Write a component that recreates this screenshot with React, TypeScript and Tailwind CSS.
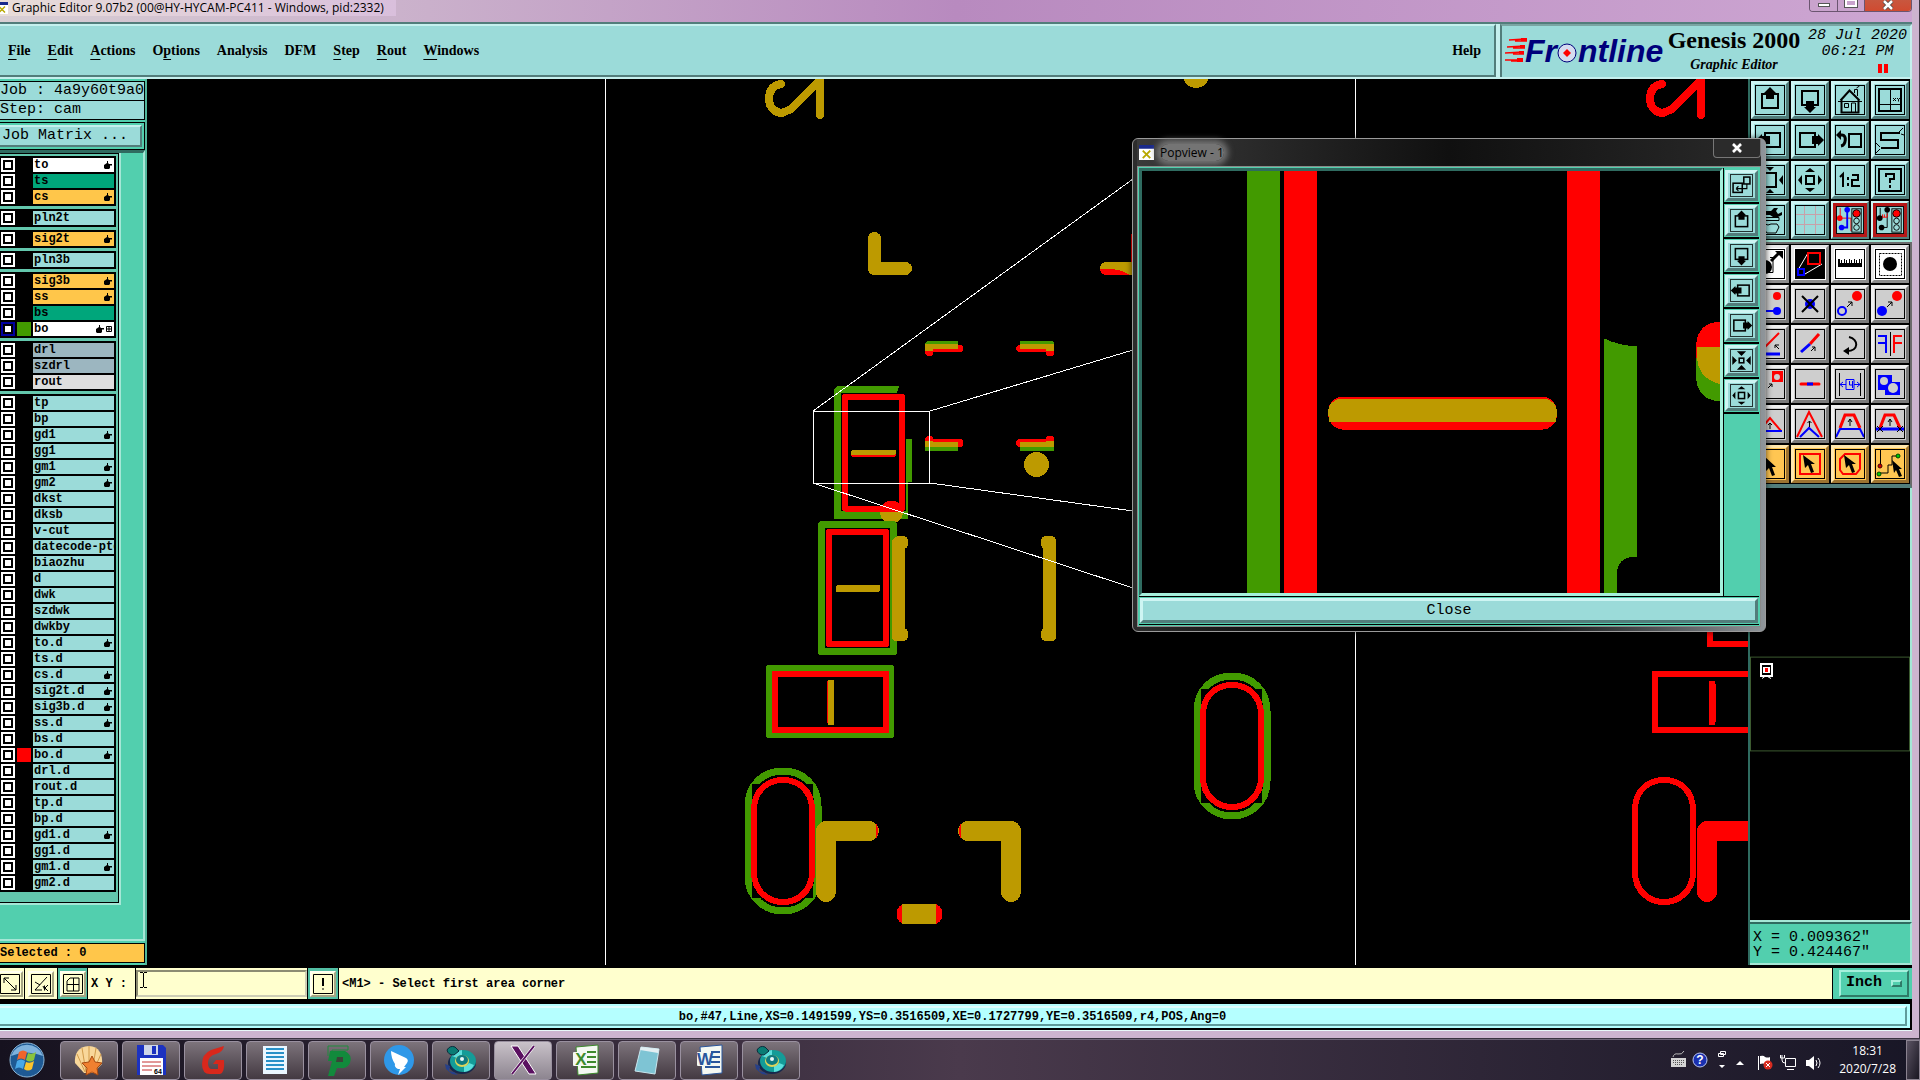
import type { ReactNode } from "react"

type Tone = "teal" | "white" | "gray" | "orange"

const tones: Record<Tone, string> = {
  teal: "bg-[#9bdbd9] border-t-[#cef5f3] border-l-[#cef5f3] border-b-[#527d7b] border-r-[#527d7b]",
  white: "bg-white border-t-[#e8e8e8] border-l-[#e8e8e8] border-b-[#8c8c8c] border-r-[#8c8c8c]",
  gray: "bg-[#cecece] border-t-[#f0f0f0] border-l-[#f0f0f0] border-b-[#7b7b7b] border-r-[#7b7b7b]",
  orange: "bg-[#ffc652] border-t-[#ffe7ad] border-l-[#ffe7ad] border-b-[#9c7331] border-r-[#9c7331]",
}

const menus = [
  ["", "F", "ile"],
  ["", "E", "dit"],
  ["", "A", "ctions"],
  ["O", "p", "tions"],
  ["Analysis", "", ""],
  ["DFM", "", ""],
  ["", "S", "tep"],
  ["", "R", "out"],
  ["", "W", "indows"],
]

type Layer = { name: string; bg?: string; hand?: boolean; swatch?: string; active?: boolean }

const WHITE = "bg-white"
const GREEN = "bg-[#00a67b]"
const ORANGE = "bg-[#ffc64a]"
const STEEL = "bg-[#9cb6c0]"

const layerGroups: Layer[][] = [
  [
    { name: "to", bg: WHITE, hand: true },
    { name: "ts", bg: GREEN },
    { name: "cs", bg: ORANGE, hand: true },
  ],
  [{ name: "pln2t" }],
  [{ name: "sig2t", bg: ORANGE, hand: true }],
  [{ name: "pln3b" }],
  [
    { name: "sig3b", bg: ORANGE, hand: true },
    { name: "ss", bg: ORANGE, hand: true },
    { name: "bs", bg: GREEN },
    { name: "bo", bg: WHITE, hand: true, swatch: "bg-[#429a00]", active: true },
  ],
  [
    { name: "drl", bg: STEEL },
    { name: "szdrl", bg: STEEL },
    { name: "rout", bg: "bg-[#dedede]" },
  ],
  [
    { name: "tp" },
    { name: "bp" },
    { name: "gd1", hand: true },
    { name: "gg1" },
    { name: "gm1", hand: true },
    { name: "gm2", hand: true },
    { name: "dkst" },
    { name: "dksb" },
    { name: "v-cut" },
    { name: "datecode-pte" },
    { name: "biaozhu" },
    { name: "d" },
    { name: "dwk" },
    { name: "szdwk" },
    { name: "dwkby" },
    { name: "to.d", hand: true },
    { name: "ts.d" },
    { name: "cs.d", hand: true },
    { name: "sig2t.d", hand: true },
    { name: "sig3b.d", hand: true },
    { name: "ss.d", hand: true },
    { name: "bs.d" },
    { name: "bo.d", hand: true, swatch: "bg-[#ff0000]" },
    { name: "drl.d" },
    { name: "rout.d" },
    { name: "tp.d" },
    { name: "bp.d" },
    { name: "gd1.d", hand: true },
    { name: "gg1.d" },
    { name: "gm1.d", hand: true },
    { name: "gm2.d" },
  ],
]

/* ---------- tool icons, all on a 30x30 grid ---------- */

const box = (x: number, y: number, w: number, h: number, s = 2, c = "#000") => (
  <rect x={x} y={y} width={w} height={h} fill="none" stroke={c} strokeWidth={s} />
)

const icons: Record<string, ReactNode> = {
  up: (
    <>
      {box(7, 9, 16, 14)}
      <path d="M15 2l6 6h-2v6h-8V8H9z" />
    </>
  ),
  down: (
    <>
      {box(7, 6, 16, 14)}
      <path d="M15 28l6-6h-2v-6h-8v6H9z" />
    </>
  ),
  house: (
    <g fill="none" stroke="#000">
      <path d="M5.500 15.500L14.500 5.500L24.500 15.500M6.500 14.500V27.500H23.500V14.500" strokeWidth="2" />
      <path d="M3 16.500h24M9.500 18.500h4v4h-4zM16.500 27v-9h4v9M19.500 8V4.500h3V11M21.500 3l3-2" />
    </g>
  ),
  pageXY: (
    <>
      {box(4, 4, 22, 22)}
      <path d="M15.500 4v22M4 19.500h22" stroke="#000" />
      <path d="M18 13l3 3m0-3l-3 3M22 13l1.500 1.500L25 13M23.500 14.500v2" stroke="#000" fill="none" />
    </>
  ),
  left: (
    <>
      {box(10, 8, 15, 14)}
      <path d="M1 15l6-6v2h8v8H7v2z" />
    </>
  ),
  right: (
    <>
      {box(5, 8, 15, 14)}
      <path d="M29 15l-6-6v2h-6v8h6v2z" />
    </>
  ),
  undo: (
    <>
      {box(14, 9, 12, 13)}
      <path d="M3 10h4c5 0 4 10-1 11" fill="none" stroke="#000" strokeWidth="3" />
      <path d="M1 10l5-5v10z" />
    </>
  ),
  snake: (
    <>
      <path d="M25 8H6v7h17v8H6" fill="none" stroke="#000" strokeWidth="2" />
      <path d="M24 7l4-4m-2 6l3 1M5 22l-4-4m4 6l-4 4" stroke="#000" />
    </>
  ),
  arrowsIn: (
    <>
      {box(8, 8, 13, 14)}
      <path d="M15 6l-4-4h8zM15 24l-4 4h8zM24 15l4-5v10zM6 15l-4-5v10z" />
    </>
  ),
  arrowsOut: (
    <>
      {box(11, 11, 8, 8)}
      <path d="M15 3l5 4H10zM15 27l5-4H10zM3 15l4-5v10zM27 15l-4-5v10z" />
    </>
  ),
  collapse: (
    <>
      {box(12, 12, 6, 6)}
      <path d="M15 9L9 3h12zM15 21l-6 6h12zM9 15L3 9v12zM21 15l6-6v12z" />
    </>
  ),
  detach: (
    <>
      {box(4, 12, 12, 12)}
      {box(18, 4, 8, 9, 2)}
      <path d="M22 13v6H8m0 0l3-3m-3 3l3 3" fill="none" stroke="#000" strokeWidth="1.500" />
    </>
  ),
  ratio: (
    <path
      d="M5 12l3-3v13M13 12v3M13 18v3M17 10h6v5h-6v6h8"
      fill="none"
      stroke="#000"
      strokeWidth="2"
    />
  ),
  question: (
    <>
      {box(4, 4, 22, 22)}
      <path d="M11 12v-3h8v5h-4v4M15 20v3" fill="none" stroke="#000" strokeWidth="2" />
    </>
  ),
  tools: (
    <>
      <path d="M0 6h16l3-3h4l-2 3 2 3 4-2v3l-4 2h-5l-3-2H0z" />
      <path d="M4 12.500h20v3H4zM6 20l4-1 3 1 3-1 6 0 2 3-3 6H12z" fill="none" stroke="#000" />
    </>
  ),
  grid: <path d="M9.500 1v28M20.500 1v28M1 9.500h28M1 19.500h28" stroke="#c9a0a8" />,
  lightA: (
    <>
      <path d="M4.500 2v10M4 13h12v14" fill="none" stroke="#f00" />
      <path d="M12 5v10l0 8H6" fill="none" stroke="#00f" strokeWidth="2" />
      <circle cx="12" cy="4" r="3" fill="#00f" />
      <circle cx="4" cy="13" r="3" fill="#f00" />
      <circle cx="6" cy="23" r="3" fill="#00f" />
      {box(17, 3, 10, 25, 1)}
      <circle cx="22" cy="8" r="4" fill="#f00" stroke="#000" />
      <circle cx="22" cy="16" r="3" fill="none" stroke="#000" />
      <circle cx="22" cy="23" r="3" fill="none" stroke="#000" />
    </>
  ),
  lightB: (
    <>
      <path d="M4.500 2v10M12 5v18H6" fill="none" stroke="#000" />
      <path d="M5 12h7v-4M7 12V9M9 12V9" fill="none" stroke="#f00" />
      <circle cx="12" cy="4" r="3" />
      <circle cx="4" cy="13" r="3" />
      <circle cx="6" cy="23" r="3" />
      {box(17, 3, 10, 25, 1)}
      <circle cx="22" cy="8" r="4" fill="#f00" stroke="#000" />
      <circle cx="22" cy="16" r="3" fill="none" stroke="#000" />
      <circle cx="22" cy="23" r="3" fill="none" stroke="#000" />
    </>
  ),
  move: (
    <>
      <circle cx="10" cy="18" r="7" />
      <path d="M15 8.500h3v15h-14" fill="none" stroke="#000" />
      <path d="M16 12l8-8" stroke="#000" strokeWidth="3" />
      <path d="M20 2h8v8z" />
    </>
  ),
  popview: (
    <>
      <rect width="30" height="30" />
      <path d="M3 21L13 4M10 25L27 15" stroke="#fff" />
      {box(13, 4, 12, 11, 2, "#f00")}
      {box(3, 20, 6, 6, 2, "#00f")}
    </>
  ),
  ruler: (
    <path d="M3 10h2v4h1v-3h1v3h2v-4h1v4h1v-3h1v3h2v-4h1v4h1v-3h1v3h2v-4h1v4h1v-3h1v3h2v-4h1v4h1v-4h1v8H3z" />
  ),
  target: (
    <>
      <rect x="4.500" y="4.500" width="22" height="22" fill="none" stroke="#000" strokeDasharray="2 1" />
      <circle cx="15" cy="15" r="7" />
    </>
  ),
  link: (
    <>
      <path d="M2 22h18" stroke="#00f" strokeWidth="2" />
      <circle cx="22" cy="7" r="4" fill="#f00" />
      <circle cx="22" cy="22" r="4" fill="#00f" />
      <circle cx="7" cy="22" r="4" fill="#00f" />
    </>
  ),
  remove: (
    <>
      <circle cx="15" cy="15" r="5" fill="#00f" />
      <path d="M7 7l16 16M23 7L7 23" stroke="#000" strokeWidth="2" />
    </>
  ),
  copyOpen: (
    <>
      <circle cx="22" cy="7" r="5" fill="#f00" />
      <circle cx="7" cy="22" r="4" fill="none" stroke="#00f" strokeWidth="2" />
      <path d="M12 18l5-5m-4 0h4v4" fill="none" stroke="#000" />
    </>
  ),
  copyFull: (
    <>
      <circle cx="22" cy="7" r="5" fill="#f00" />
      <circle cx="7" cy="22" r="5" fill="#00f" />
      <path d="M12 18l5-5m-4 0h4v4" fill="none" stroke="#000" />
    </>
  ),
  angle: (
    <>
      <path d="M4 24L24 4" stroke="#f00" strokeWidth="2" />
      <path d="M3 25h22" stroke="#00f" strokeWidth="3" />
      <path d="M24 20l-4-4m0 3v-3h4" fill="none" stroke="#000" />
    </>
  ),
  stretch: (
    <>
      <path d="M15 15L24 5" stroke="#f00" strokeWidth="3" />
      <path d="M6 23l9-8" stroke="#00f" strokeWidth="3" />
      <path d="M16 22l4-4m-3 0h3v4" fill="none" stroke="#000" />
    </>
  ),
  rotate: (
    <>
      <path d="M14 8c10 2 10 14-2 14" fill="none" stroke="#000" strokeWidth="2" />
      <path d="M8 22l6-4v8z" />
    </>
  ),
  mirror: (
    <>
      <path d="M3 7h8v17M3 14h8" fill="none" stroke="#00f" strokeWidth="2" />
      <path d="M27 7h-8v17M27 14h-8" fill="none" stroke="#f00" strokeWidth="2" />
      <path d="M15.500 3v24" stroke="#000" />
    </>
  ),
  polar: (
    <>
      <rect x="17" y="2" width="11" height="11" fill="#f00" />
      <circle cx="22" cy="8" r="3" fill="#cecece" />
      <path d="M13 19l4-4m-3 0h3v3" fill="none" stroke="#000" />
    </>
  ),
  shorten: (
    <>
      <path d="M6 15h18" stroke="#f00" strokeWidth="3" strokeLinecap="round" />
      <path d="M12 15h6" stroke="#00f" strokeWidth="3" />
    </>
  ),
  measure: (
    <>
      <path d="M4.500 4v23M25.500 4v23" stroke="#000" />
      <path d="M5 15.500h6m8 0h6M8 13l-3 2.500L8 18M22 13l3 2.500L22 18M11 10.500h8v10h-8zM14.500 12v4h3M17.500 12v7" fill="none" stroke="#00f" />
    </>
  ),
  gears: (
    <>
      <path d="M3 6h14v7h8v13H10v-5H3z" fill="#00f" />
      <circle cx="9" cy="12" r="4" fill="#cecece" />
      <circle cx="18" cy="19" r="5" fill="#cecece" />
    </>
  ),
  peakSmall: (
    <>
      <path d="M4 22L15 9l11 13" fill="none" stroke="#f00" strokeWidth="2" />
      <path d="M2 22h25" stroke="#00f" strokeWidth="2" />
      <path d="M15 20v-6m-2 2l2-2 2 2" fill="none" stroke="#000" />
    </>
  ),
  peak: (
    <>
      <path d="M2 28L14 3l13 25" fill="none" stroke="#f00" strokeWidth="2" />
      <path d="M5 28l9-9 10 9" fill="none" stroke="#00f" strokeWidth="2" />
      <path d="M14.500 18v-6m-2 2l2-2 2 2" fill="none" stroke="#000" />
    </>
  ),
  trapezoid: (
    <>
      <path d="M5 19l5-13h9l6 13" fill="none" stroke="#f00" strokeWidth="3" />
      <path d="M1 28l4-8h20l4 8" fill="none" stroke="#00f" strokeWidth="2" />
      <path d="M15 17v-7m-2 3l2-3 2 3" fill="none" stroke="#000" />
    </>
  ),
  trapezoidX: (
    <>
      <path d="M5 19l5-13h9l6 13" fill="none" stroke="#f00" strokeWidth="3" />
      <path d="M1 20h28" stroke="#00f" strokeWidth="3" />
      <path d="M15 17v-7m-2 3l2-3 2 3M2 17l6 6m0-6l-6 6M22 17l6 6m0-6l-6 6" fill="none" stroke="#000" />
    </>
  ),
  pick: <path d="M9 7l2 15 3-3 3 8 3-1-3-8h4z" />,
  pickRect: (
    <>
      {box(5, 5, 20, 20, 2, "#f00")}
      <path d="M8 6l2 13 3-3 3 8 3-1-3-8h4z" />
    </>
  ),
  pickPoly: (
    <>
      <path d="M10 5h15v15l-4 5H8l-3-4V10z" fill="none" stroke="#f00" strokeWidth="2" />
      <path d="M9 6l2 13 3-3 3 8 3-1-3-8h4z" />
    </>
  ),
  pickNet: (
    <>
      <path d="M5.500 1v15M5 24h8v-8h4V7h6" fill="none" stroke="#000" />
      <circle cx="5" cy="17" r="2" fill="#c00" stroke="#400" />
      <circle cx="4" cy="25" r="2" fill="#0c0" stroke="#040" />
      <circle cx="23" cy="7" r="2" fill="#0c0" stroke="#040" />
      <path d="M17 11l2 13 2-3 3 7 3-1-3-7h3z" />
    </>
  ),
}

const viewTools = [
  "up", "down", "house", "pageXY",
  "left", "right", "undo", "snake",
  "arrowsIn", "arrowsOut", "ratio", "question",
  "tools", "grid", "lightA", "lightB",
]

const editTools: [string, Tone][] = [
  ["move", "white"], ["popview", "white"], ["ruler", "white"], ["target", "white"],
  ["link", "gray"], ["remove", "gray"], ["copyOpen", "gray"], ["copyFull", "gray"],
  ["angle", "gray"], ["stretch", "gray"], ["rotate", "gray"], ["mirror", "gray"],
  ["polar", "gray"], ["shorten", "gray"], ["measure", "gray"], ["gears", "gray"],
  ["peakSmall", "gray"], ["peak", "gray"], ["trapezoid", "gray"], ["trapezoidX", "gray"],
  ["pick", "orange"], ["pickRect", "orange"], ["pickPoly", "orange"], ["pickNet", "orange"],
]

const popTools = ["detach", "up", "down", "left", "right", "collapse", "arrowsOut"]

function ToolIcon({ name, className }: { name: string; className: string }) {
  return (
    <svg viewBox="0 0 30 30" className={className} aria-hidden="true">
      {icons[name]}
      <rect x="0.500" y="0.500" width="29" height="29" fill="none" stroke="#000" shapeRendering="crispEdges" />
    </svg>
  )
}

function Tool({ name, tone }: { name: string; tone: Tone }) {
  const selected = name === "lightA" || name === "lightB"
  return (
    <button
      aria-label={name}
      className={`flex h-[38px] w-[38px] items-center justify-center border-[3px] ${tones[tone]}`}
    >
      <span className={selected ? "bg-[#b51818] p-px" : ""}>
        <span className={selected ? "block bg-[#9bdbd9] outline-3 outline-[#b51818]" : "block"}>
          <ToolIcon name={name} className={selected ? "h-[28px] w-[28px]" : "h-[30px] w-[30px]"} />
        </span>
      </span>
    </button>
  )
}

/* ---------- title bar, menus and logo ---------- */

function TitleBar() {
  return (
    <header className="flex h-[22px] shrink-0 justify-between overflow-hidden bg-linear-to-r from-[#d8cfd4] via-[#b88abf] to-[#cda6d2]">
      <div className="flex h-4 items-center bg-linear-to-r from-[#e8dcd8] to-[#d9bfdc] pr-3 font-['Open_Sans',sans-serif] text-[12px] leading-[14px] text-black">
        <XAppIcon className="mr-1 -ml-1 h-3 w-3" />
        Graphic Editor 9.07b2 (00@HY-HYCAM-PC411 - Windows, pid:2332)
      </div>
      <div className="flex h-[12px] overflow-hidden rounded-b border border-t-0 border-[#6b5570] text-white">
        <button aria-label="Minimize" className="flex w-[28px] items-end justify-center border-r border-[#6b5570] bg-[#c9a3cd] pb-1">
          <span className="h-1 w-3 border border-[#555] bg-white" />
        </button>
        <button aria-label="Maximize" className="flex w-[27px] items-end justify-center border-r border-[#6b5570] bg-[#c9a3cd] pb-1">
          <span className="h-2 w-3 border-2 border-white outline outline-[#555]" />
        </button>
        <button aria-label="Close" className="flex w-[46px] items-start justify-center bg-linear-to-b from-[#c8573f] to-[#d04a30]">
          <CrossIcon />
        </button>
      </div>
    </header>
  )
}

function CrossIcon() {
  return (
    <svg viewBox="0 0 12 10" className="h-[10px] w-3 shrink-0" aria-hidden="true">
      <path d="M2 1l8 8M10 1L2 9" stroke="#444" strokeWidth="4" />
      <path d="M2 1l8 8M10 1L2 9" stroke="#fff" strokeWidth="2.500" />
    </svg>
  )
}

function XAppIcon({ className }: { className: string }) {
  return (
    <svg viewBox="0 0 16 16" className={className} aria-hidden="true">
      <rect width="16" height="16" fill="#fff" />
      <rect width="16" height="4" fill="#1a2a8c" />
      <path d="M4 6l8 8M12 6l-8 8" stroke="#b8a800" strokeWidth="2" />
    </svg>
  )
}

function MenuBar() {
  return (
    <div className="flex h-[57px] shrink-0 border-t-2 border-b-2 border-t-[#527d7b] border-b-[#c5f0ee] bg-[#9bdbd9] font-['Liberation_Serif',serif] text-black">
      <nav className="flex flex-1 items-center justify-between border-2 border-l-0 border-t-[#c5f0ee] border-r-[#527d7b] border-b-[#527d7b] pr-[13px] pl-2 text-[14px] font-bold">
        <div className="flex gap-[17px]">
          {menus.map(([before, key, after]) => (
            <button key={before + key + after} className="leading-5">
              {before}
              <span className="underline decoration-1 underline-offset-4">{key}</span>
              {after}
            </button>
          ))}
        </div>
        <button>Help</button>
      </nav>
      <div className="flex w-[416px] border-l-4 border-l-[#c5f0ee]">
        <div className="flex w-full border-t-2 border-r-2 border-l-2 border-t-[#7aa5a3] border-r-[#c5f0ee] border-l-[#527d7b] pl-[3px]">
          <svg viewBox="0 0 162 36" className="mt-[7px] h-[36px] w-[162px]" role="img" aria-label="Frontline">
            <path d="M4 7l16-1M2 14l18-1M0 20l18-1M0 27l16 0M10 8h12M8 15h12M8 21h11M6 28h12" stroke="#f00" strokeWidth="1.500" />
            <path d="M16 5h6v3h-6zM15 12h5v3h-5zM14 18h5v3h-5zM12 25h6v4h-6z" fill="#f00" />
            <text x="20" y="29" fontSize="32" fill="#00007b" className="font-['Liberation_Sans',sans-serif] font-bold italic">
              Fr
            </text>
            <circle cx="62" cy="20" r="9" fill="#d5dcf0" stroke="#00007b" />
            <path d="M62 16l4 4-4 4-4-4z" fill="#f00" />
            <text x="73" y="29" fontSize="32" fill="#00007b" className="font-['Liberation_Sans',sans-serif] font-bold italic">
              ntline
            </text>
          </svg>
          <div className="w-[134px] text-center font-bold">
            <div className="mt-[3px] text-[24px] leading-[22px] whitespace-nowrap">Genesis 2000</div>
            <div className="mt-[6px] text-[14px] leading-4 italic">Graphic Editor</div>
          </div>
          <div className="flex-1 pt-[2px] pl-1 text-center font-['Liberation_Mono',monospace] text-[15px] leading-4 italic">
            <div className="whitespace-nowrap">28 Jul 2020</div>
            <div>06:21 PM</div>
            <div className="mt-1 flex justify-end gap-[2px] pr-[22px]">
              <span className="h-[9px] w-1 bg-[#ff0000]" />
              <span className="h-[9px] w-1 bg-[#ff0000]" />
            </div>
          </div>
        </div>
      </div>
    </div>
  )
}

/* ---------- layer list ---------- */

function LayerRow({ layer }: { layer: Layer }) {
  return (
    <label className="mb-[2px] flex h-[14px] pl-px">
      <span className={`flex w-[14px] items-center justify-center ${layer.active ? "bg-[#0000a0]" : "bg-white"}`}>
        <input type="checkbox" className="block h-[10px] w-[10px] appearance-none border-2 border-black bg-white" />
      </span>
      <span className={`mx-[2px] w-[14px] ${layer.swatch ?? "bg-black"}`} />
      <span
        className={`flex w-[81px] items-center overflow-hidden pl-px text-[12px] leading-[14px] font-bold ${layer.bg ?? "bg-[#9bdbd9]"}`}
      >
        <span className="flex-1 overflow-hidden whitespace-nowrap">{layer.name}</span>
        {layer.hand && (
          <svg viewBox="0 0 8 8" className="mr-[2px] h-2 w-2 shrink-0" aria-hidden="true">
            <path d="M0 4l3-2V0h1v2l1 1h3v1.500H6V7L5 8H1L0 7z" />
          </svg>
        )}
        {layer.active && (
          <svg viewBox="0 0 6 6" className="mr-[2px] h-[6px] w-[6px] shrink-0" aria-hidden="true">
            <path d="M.5.500h5v5h-5zM3 0v6M0 3h6" fill="none" stroke="#000" />
          </svg>
        )}
      </span>
    </label>
  )
}

function LeftPanel() {
  return (
    <aside className="flex w-[147px] shrink-0 flex-col border-r-2 border-r-[#52b79c] bg-[#52cfae] font-['Liberation_Mono',monospace] text-black">
      <div className="mt-[2px] border border-l-0 border-black bg-[#9bdbd9] text-[15px] leading-[18px] whitespace-nowrap">
        <div className="border-b border-black">Job : 4a9y60t9a0</div>
        <div>Step: cam</div>
      </div>
      <div className="mt-[2px] border border-l-0 border-black bg-[#52cfae] py-[2px] pr-[2px]">
        <button className="block w-full border-t-2 border-r-2 border-b-2 border-t-[#c5f0ee] border-r-[#527d7b] border-b-[#527d7b] bg-[#9bdbd9] pl-[2px] text-left text-[15px] leading-[18px]">
          Job Matrix ...
        </button>
      </div>
      <div className="flex-1 border-t-[3px] border-r-2 border-b-2 border-t-[#2f6b60] border-r-[#a5e7d6] border-b-[#a5e7d6]">
        <div className="w-[121px] border-r-2 border-b-2 border-[#a5e7d6]">
          <div className="flex flex-col gap-[3px] border-t border-r border-b border-black bg-[#63c7ad] pt-[2px] pb-[10px]">
            {layerGroups.map((group, i) => (
              <div key={i} className="w-[116px] bg-black pt-[2px]">
                {group.map((layer) => (
                  <LayerRow key={layer.name} layer={layer} />
                ))}
              </div>
            ))}
          </div>
        </div>
      </div>
      <div className="mt-[2px] mb-[2px] border border-l-0 border-black bg-[#ffc64a] text-[12px] leading-[18px] font-bold">
        Selected : 0
      </div>
    </aside>
  )
}

/* ---------- board drawing ---------- */

const RED = "#ff0000"
const LIME = "#429a00"
const GOLD = "#bd9a00"

function Oval({ x, y }: { x: number; y: number }) {
  return (
    <g transform={`translate(${x} ${y})`}>
      <path d="M4 38C4 16 20 3 39 3S74 16 74 38V108C74 130 57 143 39 143S4 130 4 108Z" fill="none" stroke={LIME} strokeWidth="7" />
      <rect x="8" y="16" width="61" height="114" fill="#000" />
      <OvalCore />
    </g>
  )
}

function OvalCore() {
  return <path d="M10 42C10 22 24 12 39 12S68 22 68 42V104C68 124 53 134 39 134S10 124 10 104Z" fill="none" stroke={RED} strokeWidth="6" />
}

function Board() {
  return (
    <svg
      viewBox="147 79 1601 886"
      preserveAspectRatio="xMidYMid slice"
      shapeRendering="crispEdges"
      className="absolute inset-0 h-full w-full"
      role="img"
      aria-label="Board view"
    >
      <path d="M605.500 78V965M1355.500 78V965" stroke="#fff" />

      <g fill="none" strokeWidth="8" strokeLinecap="round" strokeLinejoin="round">
        <path d="M1662 84C1650 86 1650 96 1650 99C1650 108 1657 113 1663 113L1672 109L1701 80V115" stroke={RED} />
        <path d="M781 84C769 86 769 96 769 99C769 108 776 113 782 113L791 109L820 80V115" stroke={GOLD} />
      </g>
      <circle cx="1196" cy="75" r="13" fill={GOLD} />

      <g fill="none" stroke={GOLD} strokeWidth="13" strokeLinecap="round" strokeLinejoin="round">
        <path d="M874.500 238.500V268.500H905.500" />
        <path d="M1106.500 268.500H1140" />
      </g>
      <path d="M1100 269H1112Q1122 270 1130 275H1106Q1100 274 1100 269Z" fill={RED} />
      <path d="M1131 234h3v28h-3z" fill={RED} />

      {/* four corner pads */}
      <path d="M927 341h31v4h-33v-2zM1020 341h32l2 2v2h-34zM925 447h33v4h-33zM1020 447h34v4h-34z" fill={LIME} />
      <path d="M932 345h29l2 2v3l-2 2h-28v3l-2 1h-4l-2-2v-5zM1047 345h-29l-2 2v3l2 2h28v3l2 1h4l2-2v-5z" fill={RED} />
      <path d="M932 447h29l2-2v-4l-2-2h-28v-2l-2-1h-4l-2 2v7zM1047 447h-29l-2-2v-4l2-2h28v-2l2-1h4l2 2v7z" fill={RED} />
      <path d="M958 340h6v5h-6zM1014 340h6v5h-6z" fill="#000" />
      <path d="M925 344h33v5h-25v2h-8zM1020 344h34v7h-8v-2h-26zM925 441h8v1h25v5h-33zM1020 442h26v-1h8v6h-34z" fill={GOLD} />
      <circle cx="1036.500" cy="464.500" r="12.500" fill={GOLD} />

      {/* upper component */}
      <path d="M834 389l3-3h62l-2 7h-56v118h65v-29h2v37h-74z" fill={LIME} />
      <path d="M906 439h6v43h-6z" fill={LIME} />
      <rect x="845" y="396.500" width="57" height="112" fill="none" stroke={RED} strokeWidth="6" strokeLinejoin="round" />
      <rect x="851" y="450" width="45" height="7" rx="3" fill={RED} />
      <rect x="851" y="450" width="45" height="5" rx="2" fill={GOLD} />
      <path d="M880 512a11.500 11.500 0 0 1 23 0z" fill={RED} />
      <path d="M880 512a11.500 11.500 0 0 0 23 0z" fill={GOLD} />

      {/* lower component */}
      <rect x="821.500" y="524.500" width="72" height="127" fill="none" stroke={LIME} strokeWidth="7" strokeLinejoin="round" />
      <rect x="829" y="532" width="57" height="112" fill="none" stroke={RED} strokeWidth="6" strokeLinejoin="round" />
      <rect x="836" y="585" width="44" height="7" rx="2" fill={GOLD} />
      <g fill={GOLD}>
        <rect x="892" y="538" width="13" height="103" rx="4" />
        <rect x="1043" y="538" width="13" height="103" rx="4" />
        <rect x="894" y="536" width="14" height="13" rx="5" />
        <rect x="894" y="628" width="14" height="13" rx="5" />
        <rect x="1041" y="536" width="15" height="13" rx="5" />
        <rect x="1041" y="628" width="15" height="13" rx="5" />
      </g>

      <rect x="769" y="668" width="122" height="67" fill="none" stroke={LIME} strokeWidth="6" strokeLinejoin="round" />
      <rect x="774.500" y="673.500" width="111" height="56" fill="none" stroke={RED} strokeWidth="6" />
      <rect x="827" y="681" width="6" height="42" fill={RED} />
      <rect x="828" y="680" width="6" height="45" rx="1" fill={GOLD} />

      <Oval x={1193} y={673} />
      <Oval x={744} y={768} />

      <g fill="none" strokeLinejoin="round" strokeLinecap="round">
        <path d="M826 892V831H869" stroke={GOLD} strokeWidth="20" />
        <path d="M968 831H1011V892" stroke={GOLD} strokeWidth="20" />
      </g>
      <path d="M876 823q4 8 0 16zM961 823q-4 8 0 16z" fill={RED} />
      <rect x="897" y="904" width="45" height="20" rx="8" fill={RED} />
      <rect x="902" y="904" width="34" height="20" fill={GOLD} />

      {/* repeated step on the right */}
      <g fill="none" stroke={RED}>
        <path d="M1710 600V644H1760" strokeWidth="6" />
        <path d="M1760 673.500H1655V730H1760" strokeWidth="6" />
        <path d="M1712 684V722" strokeWidth="7" strokeLinecap="round" />
        <path d="M1707 892V831H1760" strokeWidth="20" strokeLinecap="round" strokeLinejoin="round" />
      </g>
      <g transform="translate(1625 768)">
        <OvalCore />
      </g>

      {/* popview frame and its leader lines */}
      <g fill="none" stroke="#fff">
        <rect x="813.500" y="411.500" width="116" height="72" />
        <path d="M813 411L1133 179M930 411L1133 350M930 483L1133 511M813 483L1133 588" />
      </g>
    </svg>
  )
}

/* ---------- right tool panel ---------- */

function RightPanel() {
  return (
    <aside className="flex w-[164px] shrink-0 flex-col border-l-2 border-l-[#2f6b60] bg-black">
      <div className="border-r-2 border-b-2 border-[#a5e7d6] pt-[2px] pb-px pl-px">
        <div className="grid grid-cols-[repeat(4,38px)] gap-[2px]">
          {viewTools.map((name) => (
            <Tool key={name} name={name} tone="teal" />
          ))}
        </div>
      </div>
      <div className="border-t-2 border-r-2 border-b-4 border-[#6b6b6b] border-b-[#527d7b] pt-px pb-px pl-px">
        <div className="grid grid-cols-[repeat(4,38px)] gap-[2px]">
          {editTools.map(([name, tone]) => (
            <Tool key={name} name={name} tone={tone} />
          ))}
        </div>
      </div>
      <div className="relative flex-1 border-r-2 border-b-2 border-[#a5e7d6]">
        <svg viewBox="0 0 160 433" preserveAspectRatio="none" shapeRendering="crispEdges" className="absolute inset-0 h-full w-full" aria-hidden="true">
          <rect x="0.500" y="169.500" width="159" height="94" fill="none" stroke="#3c5a30" />
          <path d="M11 176h11v12H11z" fill="none" stroke="#fff" strokeWidth="2" />
          <rect x="13" y="179" width="7" height="6" fill="#fff" />
          <rect x="15" y="180" width="3" height="4" fill={RED} />
          <path d="M12 191l4-3 5 3" stroke="#fff" fill="none" />
        </svg>
      </div>
      <div className="h-[43px] shrink-0 border-t-2 border-r-2 border-b-2 border-[#a5e7d6] border-t-[#2f6b60] bg-[#52cfae] pt-[6px] pl-[3px] font-['Liberation_Mono',monospace] text-[15px] leading-[15px] text-black">
        <div>X = 0.009362"</div>
        <div>Y = 0.424467"</div>
      </div>
    </aside>
  )
}

/* ---------- popview window ---------- */

function Popview() {
  return (
    <section className="absolute top-[138px] right-[154px] flex h-[494px] w-[634px] flex-col rounded-md border border-[#9a9a9a] bg-linear-to-r from-[#2c2c2c] from-1% via-black to-[#8f959a] px-1 pb-1 font-['Liberation_Mono',monospace] shadow-[0_0_6px_rgba(0,0,0,0.7)]">
      <header className="flex h-[27px] shrink-0 items-center bg-linear-to-r from-[#3a3a3a] via-[#101010] to-[#2a2a2a] pl-[2px]">
        <XAppIcon className="h-[15px] w-[15px]" />
        <h2 className="ml-[6px] flex-1 font-['Open_Sans',sans-serif] text-[12px] leading-4 text-black">
          <span className="rounded-full bg-[#747474] shadow-[0_0_6px_4px_#747474]">Popview - 1</span>
        </h2>
        <button aria-label="Close popview" className="flex h-[19px] w-[48px] items-center justify-center self-start rounded-b border border-t-0 border-[#777] bg-[#2b2b2b]">
          <CrossIcon />
        </button>
      </header>
      <div className="flex min-h-0 flex-1 flex-col border border-[#8a8a8a] bg-[#52cfae] p-px">
        <div className="flex min-h-0 flex-1">
          <div className="relative flex-1 border-[3px] border-t-[#2f6b60] border-r-[#a5f0dc] border-b-[#a5f0dc] border-l-[#2f6b60] bg-black">
            <svg viewBox="1142 171 579 421" preserveAspectRatio="xMidYMid slice" shapeRendering="crispEdges" className="absolute inset-0 h-full w-full" role="img" aria-label="Magnified view">
              <path d="M1248 171h33v430h-33zM1604 338q14 7 33 8v210q-20-1-20 18v27h-13z" fill={LIME} />
              <path d="M1285 171h33v430h-33zM1567 171h33v430h-33z" fill={RED} />
              <rect x="1329" y="396" width="228" height="33" rx="15" fill={RED} />
              <path d="M1340 398h206q11 4 11 12q0 6-1 11h-226q-1-5-1-11q0-8 11-12z" fill={GOLD} />
              <path d="M1730 322h-16q-18 4-18 25v16h34z" fill={RED} />
              <path d="M1730 400h-16q-18-4-18-25v-17h34z" fill={LIME} />
              <path d="M1730 383h-12q-21-6-21-28v-8h33z" fill={GOLD} />
            </svg>
          </div>
          <div className="w-[36px] shrink-0 border-l border-black pt-px">
            {popTools.map((name) => (
              <button key={name} aria-label={name} className="flex h-[35px] w-full items-center justify-center border-b-2 border-black bg-[#52cfae] p-px">
                <span className={`flex h-full w-full items-center justify-center border-[3px] ${tones.teal}`}>
                  <ToolIcon name={name} className="h-[23px] w-[23px]" />
                </span>
              </button>
            ))}
          </div>
        </div>
        <div className="shrink-0 border-t border-b border-black p-px">
          <button className="block h-[25px] w-full border-[3px] border-t-[#cef5f3] border-r-[#527d7b] border-b-[#527d7b] border-l-[#cef5f3] bg-[#9bdbd9] text-[15px] leading-[19px] text-black">
            Close
          </button>
        </div>
      </div>
    </section>
  )
}

/* ---------- command and status lines ---------- */

function CommandIcon({ d, label, green, className }: { d: string; label: string; green?: boolean; className: string }) {
  return (
    <button
      aria-label={label}
      className={`flex shrink-0 items-center justify-center ${className} ${green ? "bg-[#52bfa4]" : "bg-[#ffffce]"}`}
    >
      <span className="border-2 border-t-[#fffff0] border-r-[#a5a584] border-b-[#a5a584] border-l-[#fffff0] bg-[#ffffce] p-px">
        <svg viewBox="0 0 20 20" className="h-5 w-5" aria-hidden="true">
          <path d={"M.5.500h19v19h-19z" + d} fill="none" stroke="#000" />
        </svg>
      </span>
    </button>
  )
}

function CommandLine() {
  return (
    <div className="flex h-[38px] shrink-0 gap-px border-t-[3px] border-b-4 border-t-black border-b-black bg-black font-['Liberation_Mono',monospace] text-[12px] font-bold text-black">
      <div className="flex w-[87px] gap-px overflow-hidden">
        <CommandIcon label="Snap off" className="-ml-[5px] w-[29px]" d="M4 4l12 12M4 9V4h5M16 11v5h-5" />
        <CommandIcon label="Snap angle" className="w-[32px]" d="M16 3L4 16h7M4 8l5 3M12 12l2 4M13.500 11.500v5M17 11l-3 3 3 3" />
        <CommandIcon label="Snap grid" className="w-[29px]" green d="M4 7l3-3h9v13H4zM10.500 4v13M4 10.500h12" />
      </div>
      <label htmlFor="xy" className="flex w-[47px] items-center bg-[#ffffce] pl-[3px] whitespace-nowrap">
        X Y :
      </label>
      <div className="relative w-[171px] bg-[#ffffce] py-[2px]">
        <input
          id="xy"
          defaultValue=""
          className="h-full w-full border-2 border-t-[#8c8c73] border-r-[#ceceb5] border-b-[#ceceb5] border-l-[#8c8c73] bg-[#ffffce] px-1"
        />
        <svg viewBox="0 0 7 16" className="pointer-events-none absolute top-1 left-1 h-4 w-[7px]" shapeRendering="crispEdges" aria-hidden="true">
          <path d="M0 .5h3M4 .5h3M3.500 1v14M0 15.500h3M4 15.500h3" stroke="#000" />
        </svg>
      </div>
      <CommandIcon label="Alert" className="w-[30px]" green d="M10.500 4v8M9.500 4v8M10 14v2" />
      <output className="flex flex-1 items-center bg-[#ffffce] pl-[3px]">&lt;M1&gt; - Select first area corner</output>
      <div className="relative w-[79px] bg-[#52cfae] py-[2px] pr-[3px] pl-[6px]">
        <select
          aria-label="Units"
          className="h-full w-full appearance-none border-2 border-t-[#a5f0dc] border-r-[#2f7b68] border-b-[#2f7b68] border-l-[#a5f0dc] pl-[5px] text-[15px] font-bold"
        >
          <option>Inch</option>
          <option>mm</option>
        </select>
        <span className="pointer-events-none absolute top-3 right-[10px] h-[7px] w-[11px] border-2 border-t-[#a5f0dc] border-r-[#2f7b68] border-b-[#2f7b68] border-l-[#a5f0dc]" />
      </div>
    </div>
  )
}

function StatusLine() {
  return (
    <div className="h-[28px] shrink-0 border-b border-b-[#e8f8f8] bg-[#b5ffff] font-['Liberation_Mono',monospace] text-[12px] font-bold text-black">
      <div className="h-full border-t border-r-2 border-b-2 border-black py-[2px] pr-[3px]">
        <p className="h-full border-t-2 border-r-2 border-b-2 border-t-[#e0ffff] border-r-[#5f9c9c] border-b-[#5f9c9c] text-center leading-[18px] whitespace-nowrap">
          bo,#47,Line,XS=0.1491599,YS=0.3516509,XE=0.1727799,YE=0.3516509,r4,POS,Ang=0
        </p>
      </div>
    </div>
  )
}

/* ---------- taskbar ---------- */

const disc = (
  <>
    <ellipse cx="18" cy="20" rx="14" ry="11" fill="#16284c" />
    <ellipse cx="19" cy="18" rx="13" ry="11" fill="#149c98" />
    <path d="M8 13a13 11 0 0 1 10-6v5a7 6 0 0 0-5 3zM30 22a13 11 0 0 1-10 7v-6a7 6 0 0 0 5-3z" fill="#5ce0dc" />
    <ellipse cx="18" cy="18" rx="7" ry="6" fill="#e0d458" />
    <ellipse cx="18" cy="17" rx="6" ry="5" fill="#0f7a80" />
    <circle cx="18" cy="16" r="2" fill="#e8f7f7" />
    <path d="M3 7q3-5 8-3l4 4-5 4q-6 0-7-5z" fill="#0a7c74" stroke="#0a2c3c" />
    <path d="M1 21l5 2-1 5 5 1 4 3-6-1-6-5z" fill="#26408a" />
  </>
)

const sheet = (color: string, letter: string) => (
  <>
    <path d="M8 4l22-2v28l-20 2z" fill="#f4f8f2" stroke={color} />
    <path d="M19 9h9M19 14h9M13 19h15M13 24h15" stroke={color} strokeWidth="2" />
    <rect x="5" y="9" width="14" height="14" rx="1" fill="#f4f8f2" />
    <text x="13" y="22" textAnchor="middle" fontSize="17" fill={color} className="font-['Liberation_Sans',sans-serif] font-bold">
      {letter}
    </text>
  </>
)

const apps: [string, ReactNode][] = [
  ["Shell", (
    <>
      <path d="M17 3C6 3 2 12 3 20l9 10h9l9-9C31 12 27 3 17 3z" fill="#f8d79a" />
      <path d="M17 3v26M10 5l4 24M24 5l-4 24M5 11l8 18M29 11l-8 18" stroke="#d09a4a" />
      <path d="M20 13l3 6 7 1-5 5 1 7-6-3-6 3 1-7-5-5 7-1z" fill="#f08030" stroke="#a84a10" />
    </>
  )],
  ["Total Commander", (
    <>
      <path d="M3 2h26l3 3v27H3z" fill="#1c32c0" />
      <rect x="10" y="2" width="14" height="10" fill="#cfd6e8" />
      <rect x="18" y="3" width="4" height="8" fill="#1c32c0" />
      <rect x="6" y="15" width="23" height="17" fill="#fff" />
      <path d="M8 19h19M8 23h19M8 27h10" stroke="#c43030" />
      <text x="20" y="31" fontSize="7" className="font-['Liberation_Sans',sans-serif] font-bold">64</text>
    </>
  )],
  ["Genesis", <path d="M28 3L15 7Q6 11 6 21Q6 31 14 31H24Q29 30 28 17H20L17 21H22V26H15Q12 25 12 20Q12 13 20 11Q27 9 28 3Z" fill="#d8281c" />],
  ["Documents", (
    <>
      <path d="M5 3h24v28H5z" fill="#eaf6ff" />
      <path d="M8 6h18M8 10h18M8 14h18M8 18h18M8 22h18M8 26h18" stroke="#2890c8" strokeWidth="2" />
    </>
  )],
  ["Protel", (
    <>
      <path d="M8 3h20v4H12v5M8 3v10" fill="none" stroke="#1f8c3c" />
      <path d="M10 8h15q8 4 5 12-3 6-9 5h-4l-3 8H8l4-15h-4z" fill="#128a3c" />
      <path d="M17 14h6v5h-7z" fill="#3a4438" />
    </>
  )],
  ["DingTalk", (
    <>
      <circle cx="17" cy="17" r="15" fill="#2f98e8" />
      <path d="M9 8l15 7q3 2 1 5l-3 4h2l-8 8 2-6h-2q-4-2-3-5-4-6-4-13z" fill="#fff" />
    </>
  )],
  ["Disc A", disc],
  ["X Server", (
    <>
      <path d="M5 3h7l18 28h-7z" fill="#5a1060" stroke="#fff" />
      <path d="M28 3L6 31" stroke="#fff" strokeWidth="3" />
      <path d="M28 3L6 31" stroke="#5a1060" strokeWidth="2" />
    </>
  )],
  ["Excel", sheet("#3d8a2c", "X")],
  ["Notepad", (
    <>
      <path d="M11 4l18 2-4 25-20-3z" fill="#7ec4d4" stroke="#c8e6ee" />
      <path d="M11 4l18 2-1 4-18-3z" fill="#e2eef2" />
    </>
  )],
  ["Word", sheet("#2a569c", "W")],
  ["Disc B", disc],
]

function Taskbar() {
  return (
    <footer className="flex h-[41px] shrink-0 items-center border-t border-t-[#6f6678] bg-linear-to-r from-[#16121f] via-[#4a3a4c] to-[#181626] pl-[8px]">
      <button aria-label="Start" className="w-[38px]">
        <svg viewBox="0 0 38 38" className="h-[38px] w-[38px]" aria-hidden="true">
          <circle cx="19" cy="19" r="17" fill="#1e5a94" stroke="#8fb8d8" />
          <path d="M3 15a17 17 0 0 1 32 0q-16-7-32 0z" fill="#7fb2dc" />
          <path d="M11 11q4-3 8 0l-2 8q-4-3-8 0z" fill="#f0642c" />
          <path d="M20 12q4 2 8-1l-2 8q-4 3-8 0z" fill="#8ac43c" />
          <path d="M9 20q4-3 8 0l-2 8q-4-3-8 0z" fill="#48a8e8" />
          <path d="M18 21q4 2 8-1l-2 8q-4 3-8 0z" fill="#fcc42c" />
        </svg>
      </button>
      <div className="ml-[14px] flex flex-1 gap-1">
        {apps.map(([name, art]) => (
          <button
            key={name}
            aria-label={name}
            className={`flex h-[39px] w-[58px] items-center justify-center rounded-sm border border-[#99909f] ${
              name === "X Server" ? "bg-linear-to-b from-[#c9c2c9] to-[#8d8590]" : "bg-linear-to-b from-[#7d747c] to-[#443a42]"
            }`}
          >
            <svg viewBox="0 0 34 34" className="h-[34px] w-[34px]" aria-hidden="true">
              {art}
            </svg>
          </button>
        ))}
      </div>
      <svg viewBox="0 0 156 24" className="h-6 w-[156px]" aria-hidden="true">
        <path d="M2 10h15v9H2z" fill="#d5d5d5" />
        <path d="M4 12.500h11M4 14.500h11M6 16.500h7" stroke="#555" strokeDasharray="1 1" />
        <path d="M4 9q1-4 5-3t6-3" stroke="#bbb" fill="none" />
        <circle cx="31" cy="12" r="7" fill="#1a30b0" stroke="#b8c4f0" />
        <text x="31" y="16" textAnchor="middle" fontSize="12" fill="#fff" className="font-['Liberation_Sans',sans-serif] font-bold">?</text>
        <path d="M51.500 3.500h5v3h-5zM49.500 5.500h5v3h-5z" fill="none" stroke="#fff" />
        <path d="M50 17h6l-3 3zM67 17l4-4 4 4z" fill="#fff" />
        <path d="M89.500 8v14" stroke="#fff" />
        <path d="M91 8q4-1 5 1 3 1 5 0v7q-3 1-5 0-2-1-5 0z" fill="#fff" />
        <circle cx="99" cy="17" r="4.500" fill="#d82c20" />
        <path d="M97 15l4 4m0-4l-4 4" stroke="#fff" />
        <path d="M116.500 10.500h10v8h-10zM118 21.500h7M113 7v5q0 3 3 3M111.500 7v3h4V7" fill="none" stroke="#fff" />
        <path d="M137 12h3l5-4v14l-5-4h-3z" fill="#fff" />
        <path d="M147 12q2 3 0 6M149 10q4 5 0 10" fill="none" stroke="#fff" />
      </svg>
      <time className="mr-[10px] ml-[14px] text-center font-['Open_Sans',sans-serif] text-[12px] leading-[18px] text-white">
        <div>18:31</div>
        <div>2020/7/28</div>
      </time>
      <button aria-label="Show desktop" className="h-full w-[14px] border border-[#8a8290] bg-linear-to-br from-[#5c5464] to-[#1a1722]" />
    </footer>
  )
}

export default function App() {
  return (
    <div className="relative flex h-screen flex-col overflow-hidden bg-black">
      <main className="flex min-h-0 flex-1 flex-col border-r border-b border-[#3a3340] bg-[#cdb4cf] pr-[7px] pb-[7px]">
        <TitleBar />
        <MenuBar />
        <div className="flex min-h-0 flex-1 bg-black">
          <LeftPanel />
          <div className="relative min-w-0 flex-1 overflow-hidden">
            <Board />
          </div>
          <RightPanel />
        </div>
        <CommandLine />
        <StatusLine />
      </main>
      <Taskbar />
      <Popview />
    </div>
  )
}
